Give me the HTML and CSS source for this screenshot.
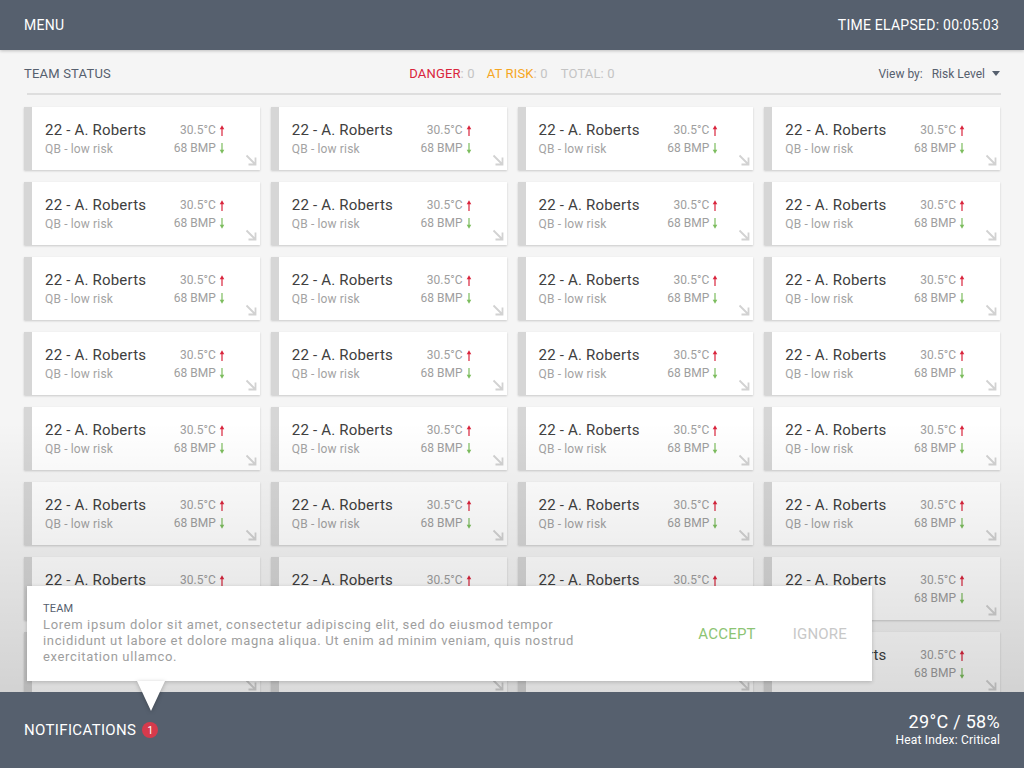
FILE: index.html
```html
<!DOCTYPE html>
<html>
<head>
<meta charset="utf-8">
<link rel="stylesheet" href="styles.css">
</head>
<body>
<svg class="defs" width="0" height="0">
  <symbol id="up" viewBox="0 0 6 11"><path d="M3 3.5V11" stroke="currentColor" stroke-width="1.2"/><path d="M0.7 4.2L3 0.2 5.3 4.2z" fill="currentColor"/></symbol>
  <symbol id="down" viewBox="0 0 6 11"><path d="M3 0V7.5" stroke="currentColor" stroke-width="1.2"/><path d="M0.7 6.8L3 10.8 5.3 6.8z" fill="currentColor"/></symbol>
  <symbol id="corner" viewBox="0 0 12 12"><path d="M1.5 1.5L10 10M3.5 10.5H10.5V3.5" stroke="currentColor" stroke-width="1.8" fill="none"/></symbol>
</svg>
<header class="topbar">
  <span>MENU</span>
  <span>TIME ELAPSED: 00:05:03</span>
</header>
<main class="content">
  <div class="status">
    <div class="status-title">TEAM STATUS</div>
    <div class="counts"><span class="danger">DANGER</span>: 0<span class="risk">AT RISK</span>: 0<span class="total">TOTAL: 0</span></div>
    <div class="viewby"><span class="vb-label">View by:</span><span class="vb-value">Risk Level</span><span class="caret"></span></div>
  </div>
  <div class="divider"></div>
  <div class="grid">
    <div class="card"><div class="info"><div class="name">22 - A. Roberts</div><div class="pos">QB - low risk</div></div><div class="vitals"><div>30.5°C<svg class="up"><use href="#up"/></svg></div><div>68 BMP<svg class="down"><use href="#down"/></svg></div></div><svg class="corner"><use href="#corner"/></svg></div>
    <div class="card"><div class="info"><div class="name">22 - A. Roberts</div><div class="pos">QB - low risk</div></div><div class="vitals"><div>30.5°C<svg class="up"><use href="#up"/></svg></div><div>68 BMP<svg class="down"><use href="#down"/></svg></div></div><svg class="corner"><use href="#corner"/></svg></div>
    <div class="card"><div class="info"><div class="name">22 - A. Roberts</div><div class="pos">QB - low risk</div></div><div class="vitals"><div>30.5°C<svg class="up"><use href="#up"/></svg></div><div>68 BMP<svg class="down"><use href="#down"/></svg></div></div><svg class="corner"><use href="#corner"/></svg></div>
    <div class="card"><div class="info"><div class="name">22 - A. Roberts</div><div class="pos">QB - low risk</div></div><div class="vitals"><div>30.5°C<svg class="up"><use href="#up"/></svg></div><div>68 BMP<svg class="down"><use href="#down"/></svg></div></div><svg class="corner"><use href="#corner"/></svg></div>

    <div class="card"><div class="info"><div class="name">22 - A. Roberts</div><div class="pos">QB - low risk</div></div><div class="vitals"><div>30.5°C<svg class="up"><use href="#up"/></svg></div><div>68 BMP<svg class="down"><use href="#down"/></svg></div></div><svg class="corner"><use href="#corner"/></svg></div>
    <div class="card"><div class="info"><div class="name">22 - A. Roberts</div><div class="pos">QB - low risk</div></div><div class="vitals"><div>30.5°C<svg class="up"><use href="#up"/></svg></div><div>68 BMP<svg class="down"><use href="#down"/></svg></div></div><svg class="corner"><use href="#corner"/></svg></div>
    <div class="card"><div class="info"><div class="name">22 - A. Roberts</div><div class="pos">QB - low risk</div></div><div class="vitals"><div>30.5°C<svg class="up"><use href="#up"/></svg></div><div>68 BMP<svg class="down"><use href="#down"/></svg></div></div><svg class="corner"><use href="#corner"/></svg></div>
    <div class="card"><div class="info"><div class="name">22 - A. Roberts</div><div class="pos">QB - low risk</div></div><div class="vitals"><div>30.5°C<svg class="up"><use href="#up"/></svg></div><div>68 BMP<svg class="down"><use href="#down"/></svg></div></div><svg class="corner"><use href="#corner"/></svg></div>

    <div class="card"><div class="info"><div class="name">22 - A. Roberts</div><div class="pos">QB - low risk</div></div><div class="vitals"><div>30.5°C<svg class="up"><use href="#up"/></svg></div><div>68 BMP<svg class="down"><use href="#down"/></svg></div></div><svg class="corner"><use href="#corner"/></svg></div>
    <div class="card"><div class="info"><div class="name">22 - A. Roberts</div><div class="pos">QB - low risk</div></div><div class="vitals"><div>30.5°C<svg class="up"><use href="#up"/></svg></div><div>68 BMP<svg class="down"><use href="#down"/></svg></div></div><svg class="corner"><use href="#corner"/></svg></div>
    <div class="card"><div class="info"><div class="name">22 - A. Roberts</div><div class="pos">QB - low risk</div></div><div class="vitals"><div>30.5°C<svg class="up"><use href="#up"/></svg></div><div>68 BMP<svg class="down"><use href="#down"/></svg></div></div><svg class="corner"><use href="#corner"/></svg></div>
    <div class="card"><div class="info"><div class="name">22 - A. Roberts</div><div class="pos">QB - low risk</div></div><div class="vitals"><div>30.5°C<svg class="up"><use href="#up"/></svg></div><div>68 BMP<svg class="down"><use href="#down"/></svg></div></div><svg class="corner"><use href="#corner"/></svg></div>

    <div class="card"><div class="info"><div class="name">22 - A. Roberts</div><div class="pos">QB - low risk</div></div><div class="vitals"><div>30.5°C<svg class="up"><use href="#up"/></svg></div><div>68 BMP<svg class="down"><use href="#down"/></svg></div></div><svg class="corner"><use href="#corner"/></svg></div>
    <div class="card"><div class="info"><div class="name">22 - A. Roberts</div><div class="pos">QB - low risk</div></div><div class="vitals"><div>30.5°C<svg class="up"><use href="#up"/></svg></div><div>68 BMP<svg class="down"><use href="#down"/></svg></div></div><svg class="corner"><use href="#corner"/></svg></div>
    <div class="card"><div class="info"><div class="name">22 - A. Roberts</div><div class="pos">QB - low risk</div></div><div class="vitals"><div>30.5°C<svg class="up"><use href="#up"/></svg></div><div>68 BMP<svg class="down"><use href="#down"/></svg></div></div><svg class="corner"><use href="#corner"/></svg></div>
    <div class="card"><div class="info"><div class="name">22 - A. Roberts</div><div class="pos">QB - low risk</div></div><div class="vitals"><div>30.5°C<svg class="up"><use href="#up"/></svg></div><div>68 BMP<svg class="down"><use href="#down"/></svg></div></div><svg class="corner"><use href="#corner"/></svg></div>

    <div class="card"><div class="info"><div class="name">22 - A. Roberts</div><div class="pos">QB - low risk</div></div><div class="vitals"><div>30.5°C<svg class="up"><use href="#up"/></svg></div><div>68 BMP<svg class="down"><use href="#down"/></svg></div></div><svg class="corner"><use href="#corner"/></svg></div>
    <div class="card"><div class="info"><div class="name">22 - A. Roberts</div><div class="pos">QB - low risk</div></div><div class="vitals"><div>30.5°C<svg class="up"><use href="#up"/></svg></div><div>68 BMP<svg class="down"><use href="#down"/></svg></div></div><svg class="corner"><use href="#corner"/></svg></div>
    <div class="card"><div class="info"><div class="name">22 - A. Roberts</div><div class="pos">QB - low risk</div></div><div class="vitals"><div>30.5°C<svg class="up"><use href="#up"/></svg></div><div>68 BMP<svg class="down"><use href="#down"/></svg></div></div><svg class="corner"><use href="#corner"/></svg></div>
    <div class="card"><div class="info"><div class="name">22 - A. Roberts</div><div class="pos">QB - low risk</div></div><div class="vitals"><div>30.5°C<svg class="up"><use href="#up"/></svg></div><div>68 BMP<svg class="down"><use href="#down"/></svg></div></div><svg class="corner"><use href="#corner"/></svg></div>

    <div class="card"><div class="info"><div class="name">22 - A. Roberts</div><div class="pos">QB - low risk</div></div><div class="vitals"><div>30.5°C<svg class="up"><use href="#up"/></svg></div><div>68 BMP<svg class="down"><use href="#down"/></svg></div></div><svg class="corner"><use href="#corner"/></svg></div>
    <div class="card"><div class="info"><div class="name">22 - A. Roberts</div><div class="pos">QB - low risk</div></div><div class="vitals"><div>30.5°C<svg class="up"><use href="#up"/></svg></div><div>68 BMP<svg class="down"><use href="#down"/></svg></div></div><svg class="corner"><use href="#corner"/></svg></div>
    <div class="card"><div class="info"><div class="name">22 - A. Roberts</div><div class="pos">QB - low risk</div></div><div class="vitals"><div>30.5°C<svg class="up"><use href="#up"/></svg></div><div>68 BMP<svg class="down"><use href="#down"/></svg></div></div><svg class="corner"><use href="#corner"/></svg></div>
    <div class="card"><div class="info"><div class="name">22 - A. Roberts</div><div class="pos">QB - low risk</div></div><div class="vitals"><div>30.5°C<svg class="up"><use href="#up"/></svg></div><div>68 BMP<svg class="down"><use href="#down"/></svg></div></div><svg class="corner"><use href="#corner"/></svg></div>

    <div class="card"><div class="info"><div class="name">22 - A. Roberts</div><div class="pos">QB - low risk</div></div><div class="vitals"><div>30.5°C<svg class="up"><use href="#up"/></svg></div><div>68 BMP<svg class="down"><use href="#down"/></svg></div></div><svg class="corner"><use href="#corner"/></svg></div>
    <div class="card"><div class="info"><div class="name">22 - A. Roberts</div><div class="pos">QB - low risk</div></div><div class="vitals"><div>30.5°C<svg class="up"><use href="#up"/></svg></div><div>68 BMP<svg class="down"><use href="#down"/></svg></div></div><svg class="corner"><use href="#corner"/></svg></div>
    <div class="card"><div class="info"><div class="name">22 - A. Roberts</div><div class="pos">QB - low risk</div></div><div class="vitals"><div>30.5°C<svg class="up"><use href="#up"/></svg></div><div>68 BMP<svg class="down"><use href="#down"/></svg></div></div><svg class="corner"><use href="#corner"/></svg></div>
    <div class="card"><div class="info"><div class="name">22 - A. Roberts</div><div class="pos">QB - low risk</div></div><div class="vitals"><div>30.5°C<svg class="up"><use href="#up"/></svg></div><div>68 BMP<svg class="down"><use href="#down"/></svg></div></div><svg class="corner"><use href="#corner"/></svg></div>

    <div class="card"><div class="info"><div class="name">22 - A. Roberts</div><div class="pos">QB - low risk</div></div><div class="vitals"><div>30.5°C<svg class="up"><use href="#up"/></svg></div><div>68 BMP<svg class="down"><use href="#down"/></svg></div></div><svg class="corner"><use href="#corner"/></svg></div>
    <div class="card"><div class="info"><div class="name">22 - A. Roberts</div><div class="pos">QB - low risk</div></div><div class="vitals"><div>30.5°C<svg class="up"><use href="#up"/></svg></div><div>68 BMP<svg class="down"><use href="#down"/></svg></div></div><svg class="corner"><use href="#corner"/></svg></div>
    <div class="card"><div class="info"><div class="name">22 - A. Roberts</div><div class="pos">QB - low risk</div></div><div class="vitals"><div>30.5°C<svg class="up"><use href="#up"/></svg></div><div>68 BMP<svg class="down"><use href="#down"/></svg></div></div><svg class="corner"><use href="#corner"/></svg></div>
    <div class="card"><div class="info"><div class="name">22 - A. Roberts</div><div class="pos">QB - low risk</div></div><div class="vitals"><div>30.5°C<svg class="up"><use href="#up"/></svg></div><div>68 BMP<svg class="down"><use href="#down"/></svg></div></div><svg class="corner"><use href="#corner"/></svg></div>
  </div>
  <div class="fade"></div>
</main>
<div class="popup">
  <div class="popup-text">
    <div class="popup-title">TEAM</div>
    <p>Lorem ipsum dolor sit amet, consectetur adipiscing elit, sed do eiusmod tempor incididunt ut labore et dolore magna aliqua. Ut enim ad minim veniam, quis nostrud exercitation ullamco.</p>
  </div>
  <div class="actions">
    <span class="accept">ACCEPT</span>
    <span class="ignore">IGNORE</span>
  </div>
</div>
<footer class="bottombar">
  <div class="notif">NOTIFICATIONS<span class="badge">1</span></div>
  <div class="weather">
    <div class="temp">29°C / 58%</div>
    <div class="heat">Heat Index: Critical</div>
  </div>
</footer>
</body>
</html>
```

FILE: styles.css
```css
* { box-sizing: border-box; }

html, body {
  margin: 0;
  padding: 0;
}

body {
  width: 1024px;
  height: 768px;
  overflow: hidden;
  position: relative;
  display: flex;
  flex-direction: column;
  background: #f5f5f5;
  font-family: Roboto, "Liberation Sans", sans-serif;
}

.defs {
  position: absolute;
  width: 0;
  height: 0;
}

.topbar {
  height: 50px;
  flex: none;
  display: flex;
  justify-content: space-between;
  align-items: center;
  padding: 0 25px 0 24px;
  background: #56606e;
  color: #fff;
  font-size: 14px;
  letter-spacing: 0.25px;
  box-shadow: 0 1px 3px rgba(0, 0, 0, 0.22);
  position: relative;
  z-index: 2;
}

.content {
  flex: 1;
  overflow: hidden;
  position: relative;
  padding: 0 24px;
}

.status {
  height: 43px;
  padding-top: 4px;
  display: grid;
  grid-template-columns: 1fr auto 1fr;
  align-items: center;
  font-size: 12px;
}

.status-title {
  color: #56606e;
  font-size: 13px;
  letter-spacing: 0.2px;
}

.counts {
  color: #c4c4c4;
  font-size: 13px;
  letter-spacing: 0.15px;
}

.danger { color: #d9243c; }
.risk { color: #f5a623; margin-left: 12px; }
.total { color: #c4c4c4; margin-left: 13px; }

.viewby {
  justify-self: end;
  display: flex;
  align-items: center;
  color: #56606e;
  font-size: 12px;
}

.vb-value { margin-left: 9px; }

.caret {
  margin-left: 7px;
  width: 0;
  height: 0;
  border-left: 4.5px solid transparent;
  border-right: 4.5px solid transparent;
  border-top: 5px solid #56606e;
}

.divider {
  height: 2px;
  background: #dedede;
  margin: 0 -1px 0 3px;
}

.grid {
  display: grid;
  grid-template-columns: repeat(4, 1fr);
  gap: 12px 11px;
  margin-top: 12px;
}

.card {
  height: 63px;
  position: relative;
  display: flex;
  justify-content: space-between;
  padding: 14px 35px 0 13px;
  background: #fff;
  border-left: 8px solid #d6d6d6;
  box-shadow: 0 1px 2px rgba(0, 0, 0, 0.18);
}

.name {
  font-size: 15px;
  line-height: 18px;
  letter-spacing: 0.2px;
  color: #404040;
}

.pos {
  font-size: 12px;
  line-height: 16px;
  margin-top: 2px;
  letter-spacing: 0.15px;
  color: #a3a3a3;
}

.vitals {
  font-size: 12px;
  line-height: 18px;
  color: #9e9e9e;
  text-align: right;
}

.vitals div {
  display: flex;
  align-items: center;
  justify-content: flex-end;
}

.vitals svg {
  width: 6px;
  height: 11px;
  margin-left: 3px;
}

.up { color: #d9243c; }
.down { color: #7cbd5e; }

.corner {
  position: absolute;
  right: 3px;
  bottom: 4px;
  width: 12px;
  height: 12px;
  color: #d2d2d2;
}

.fade {
  position: absolute;
  left: 0;
  right: 0;
  bottom: 0;
  height: 270px;
  background: linear-gradient(to bottom, rgba(0, 0, 0, 0), rgba(0, 0, 0, 0.14));
  pointer-events: none;
}

.popup {
  position: absolute;
  left: 27px;
  top: 586px;
  width: 845px;
  height: 95px;
  z-index: 5;
  background: #fff;
  box-shadow: 0 1px 4px rgba(0, 0, 0, 0.2);
  display: flex;
  justify-content: space-between;
  align-items: center;
  padding: 0 25px 0 16px;
}

.popup::after {
  content: "";
  position: absolute;
  left: 110px;
  top: 100%;
  width: 0;
  height: 0;
  border-left: 14px solid transparent;
  border-right: 14px solid transparent;
  border-top: 30px solid #fff;
  filter: drop-shadow(0 1px 2px rgba(0, 0, 0, 0.25));
}

.popup-text {
  width: 545px;
  align-self: flex-start;
  padding-top: 16px;
}

.popup-title {
  font-size: 11px;
  line-height: 14px;
  letter-spacing: 0.2px;
  color: #56606e;
}

.popup-text p {
  margin: 1px 0 0;
  font-size: 13px;
  line-height: 16px;
  letter-spacing: 0.65px;
  color: #9e9e9e;
}

.actions {
  display: flex;
  gap: 37px;
  font-size: 15px;
  letter-spacing: 0.2px;
}

.accept { color: #8cc474; }
.ignore { color: #c8c8c8; }

.bottombar {
  height: 76px;
  flex: none;
  display: flex;
  justify-content: space-between;
  align-items: center;
  padding: 0 24px;
  background: #56606e;
  color: #fff;
  position: relative;
  z-index: 3;
}

.notif {
  display: flex;
  align-items: center;
  font-size: 15px;
  letter-spacing: 0.35px;
}

.badge {
  width: 16px;
  height: 16px;
  margin-left: 6px;
  border-radius: 50%;
  background: #d63a4c;
  color: #fff;
  font-size: 10px;
  letter-spacing: 0;
  display: flex;
  align-items: center;
  justify-content: center;
}

.weather {
  text-align: right;
}

.temp {
  font-size: 18px;
  line-height: 20px;
  letter-spacing: 0.3px;
}

.heat {
  font-size: 12px;
  line-height: 16px;
  letter-spacing: 0.2px;
}
```
